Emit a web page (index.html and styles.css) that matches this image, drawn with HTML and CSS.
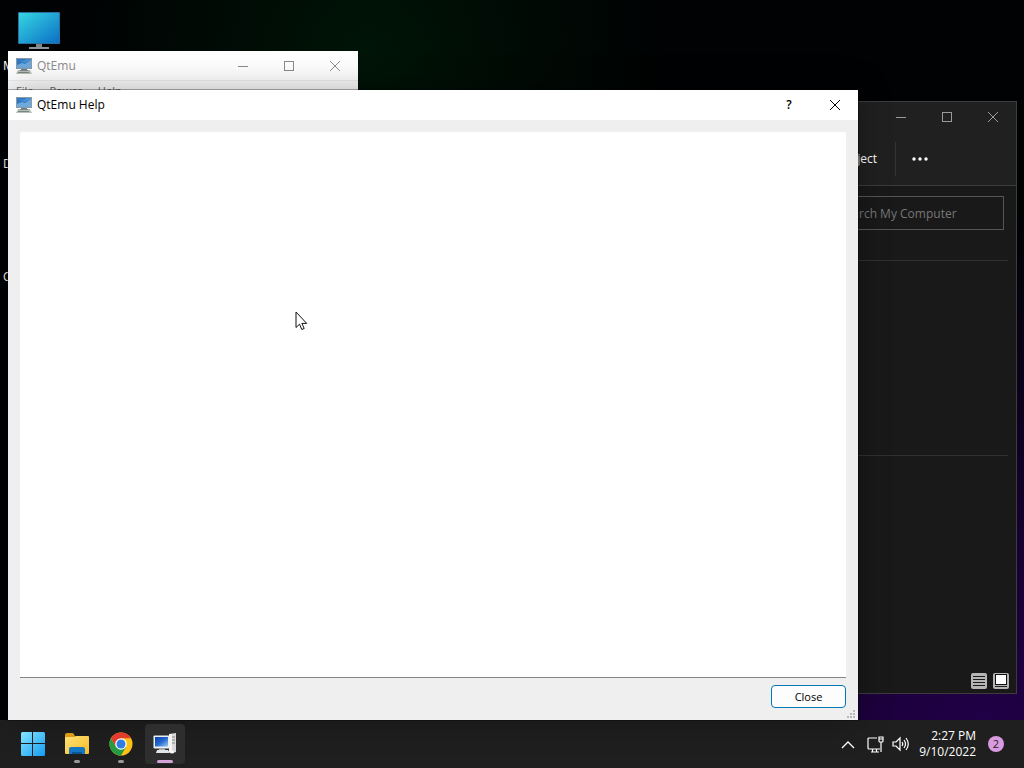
FILE: index.html
```html
<!DOCTYPE html>
<html lang="en">
<head>
    <meta charset="UTF-8">
    <meta name="viewport" content="width=device-width, initial-scale=1.0">
    <title>QtEmu Help</title>
    <link rel="stylesheet" href="styles.css">
</head>
<body>

<!-- Shared icons -->
<svg class="symbols" aria-hidden="true">
    <defs>
        <linearGradient id="screenBlue" x1="0" y1="0" x2="1" y2="1">
            <stop offset="0" stop-color="#35d6e2"/>
            <stop offset="1" stop-color="#0c6fc6"/>
        </linearGradient>
        <linearGradient id="winBlue" x1="0" y1="0" x2="1" y2="1">
            <stop offset="0" stop-color="#86e4ff"/>
            <stop offset="1" stop-color="#149df0"/>
        </linearGradient>
        <linearGradient id="folderYellow" x1="0" y1="0" x2="1" y2="1">
            <stop offset="0" stop-color="#ffe07a"/>
            <stop offset="1" stop-color="#f9bd22"/>
        </linearGradient>
        <linearGradient id="pcBlue" x1="0" y1="0" x2="1" y2="1">
            <stop offset="0" stop-color="#0b3fa8"/>
            <stop offset="0.5" stop-color="#2368cf"/>
            <stop offset="1" stop-color="#9cc8f5"/>
        </linearGradient>
    </defs>
    <symbol id="qtemu" viewBox="0 0 16 16">
        <rect x="0" y="0" width="16" height="11" fill="#8c9aa8"/>
        <rect x="1" y="1" width="14" height="9" fill="#2f78c4"/>
        <path d="M1 7l5-2 3 1 6-4v8H1z" fill="#6ea9dc"/>
        <path d="M1 2l6 1 4-2h4v1L9 5z" fill="#4c8fd2"/>
        <path d="M5 11h6v2H5z" fill="#6b7f8c"/>
        <path d="M2 12h12l2 4H0z" fill="#b9bfb9"/>
        <path d="M2 14.500h11M4 12.500h8" stroke="#78887e" fill="none"/>
    </symbol>
    <symbol id="minimize" viewBox="0 0 12 12"><path d="M1 6.500h10" stroke="currentColor"/></symbol>
    <symbol id="maximize" viewBox="0 0 12 12"><rect x="1.500" y="1.500" width="9" height="9" fill="none" stroke="currentColor"/></symbol>
    <symbol id="cross" viewBox="0 0 12 12"><path d="M1 1l10 10M11 1L1 11" stroke="currentColor" fill="none"/></symbol>
</svg>

<main class="desktop">

    <div class="desktop-icons">
        <div class="shortcut">
            <svg width="44" height="38" viewBox="0 0 44 38">
                <rect x="1" y="0" width="42" height="32" rx="1" fill="#2a6f9e"/>
                <rect x="2" y="1" width="40" height="30" fill="url(#screenBlue)"/>
                <path d="M19 32h6v4h-6z" fill="#7d858b"/>
                <path d="M12 35h20v2H12z" fill="#8d949a"/>
            </svg>
            <span>M</span>
        </div>
        <div class="shortcut"><span>D</span></div>
        <div class="shortcut"><span>C</span></div>
    </div>

    <!-- File explorer -->
    <section class="window explorer">
        <header class="titlebar">
            <div class="controls">
                <button aria-label="Minimize"><svg><use href="#minimize"/></svg></button>
                <button aria-label="Maximize"><svg><use href="#maximize"/></svg></button>
                <button aria-label="Close window"><svg><use href="#cross"/></svg></button>
            </div>
        </header>
        <div class="toolbar">
            <button class="eject">Eject</button>
            <button class="more" aria-label="More">
                <svg width="18" height="4" viewBox="0 0 18 4" fill="#fff"><circle cx="3" cy="2" r="1.700"/><circle cx="9" cy="2" r="1.700"/><circle cx="15" cy="2" r="1.700"/></svg>
            </button>
        </div>
        <div class="search-row">
            <input type="text" class="search" placeholder="Search My Computer" aria-label="Search My Computer">
        </div>
        <div class="group first"></div>
        <div class="group"></div>
        <div class="views">
            <button aria-label="Details">
                <svg width="16" height="16" viewBox="0 0 16 16"><rect width="16" height="16" rx="2" fill="#b5b5b5"/><path d="M2 3.500h12M2 6.500h12M2 9.500h12M2 12.500h12" stroke="#191919"/></svg>
            </button>
            <button aria-label="Large icons">
                <svg width="16" height="16" viewBox="0 0 16 16"><rect width="16" height="16" rx="2" fill="#b5b5b5"/><rect x="2.500" y="1.500" width="11" height="10" fill="#fff" stroke="#111"/><path d="M2 13.500h12" stroke="#222"/></svg>
            </button>
        </div>
    </section>

    <!-- QtEmu main window -->
    <section class="window qtemu">
        <header class="titlebar">
            <svg class="app-icon"><use href="#qtemu"/></svg>
            <h2>QtEmu</h2>
            <div class="controls">
                <button aria-label="Minimize"><svg><use href="#minimize"/></svg></button>
                <button aria-label="Maximize"><svg><use href="#maximize"/></svg></button>
                <button aria-label="Close window"><svg><use href="#cross"/></svg></button>
            </div>
        </header>
        <nav class="menubar">
            <button>File</button>
            <button>Power</button>
            <button>Help</button>
        </nav>
    </section>

    <!-- Help dialog -->
    <section class="window help">
        <header class="titlebar">
            <svg class="app-icon"><use href="#qtemu"/></svg>
            <h1>QtEmu Help</h1>
            <div class="controls">
                <button class="question">?</button>
                <button aria-label="Close window"><svg><use href="#cross"/></svg></button>
            </div>
        </header>
        <div class="help-body">
            <textarea class="help-text" aria-label="Help text" readonly></textarea>
            <div class="actions"><button class="close">Close</button></div>
        </div>
        <svg class="grip" width="9" height="9" viewBox="0 0 9 9" fill="#b8b8b8">
            <path d="M6 0h2v2H6zM3 3h2v2H3zM6 3h2v2H6zM0 6h2v2H0zM3 6h2v2H3zM6 6h2v2H6z"/>
        </svg>
    </section>

    <svg class="cursor" width="13" height="20" viewBox="0 0 13 20">
        <path d="M1 1v15.500l3.500-3.300 2.300 5.300 2.400-1-2.300-5.100h4.800z" fill="#fff" stroke="#111"/>
    </svg>
</main>

<footer class="taskbar">
    <div class="apps">
        <button class="app" aria-label="Start">
            <svg width="24" height="24" viewBox="0 0 24 24" fill="url(#winBlue)"><path d="M1.500 0H11v11H0V1.500Q0 0 1.500 0zM12 0h10.500Q24 0 24 1.500V11H12zM0 12h11v12H1.500Q0 24 0 22.500zM12 12h12v10.500q0 1.500-1.500 1.500H12z"/></svg>
        </button>
        <button class="app running" aria-label="File Explorer">
            <svg width="26" height="24" viewBox="0 0 26 24">
                <path d="M1 3q0-2 2-2h6l2 3v4H1z" fill="#dd9a12"/>
                <path d="M2 5h8l2-1h12q1 0 1 1v16q0 1-1 1H2q-1 0-1-1V6q0-1 1-1z" fill="url(#folderYellow)"/>
                <path d="M5 22v-5q0-2 2-2h12q2 0 2 2v5z" fill="#1377c3"/>
                <path d="M8 22v-2h10v2z" fill="#0a5594"/>
            </svg>
        </button>
        <button class="app running" aria-label="Google Chrome">
            <svg width="24" height="24" viewBox="0 0 24 24">
                <circle cx="12" cy="12" r="11.500" fill="#fbc116"/>
                <path d="M12 12L7 14.900 2.040 6.250A11.500 11.500 0 0 1 21.960 6.250H12z" fill="#e33b2e"/>
                <path d="M12 12L7 14.900 2.040 6.250A11.500 11.500 0 0 0 12 23.500L17 14.900z" fill="#249a41"/>
                <circle cx="12" cy="12" r="5.800" fill="#fff"/>
                <circle cx="12" cy="12" r="4.500" fill="#2f7de1"/>
            </svg>
        </button>
        <button class="app running active" aria-label="QtEmu">
            <svg width="24" height="24" viewBox="0 0 24 24">
                <path d="M16 2l7-1v19l-3 1-4-1z" fill="#d9d9d9"/>
                <path d="M16 2l3 0.500V21l-3-1z" fill="#f5f5f5"/>
                <path d="M19 5h3M19 8h3M19 11h3" stroke="#888"/>
                <rect x="0.500" y="3.500" width="16" height="13" rx="1" fill="#eceff2"/>
                <rect x="2" y="5" width="13" height="9.500" fill="url(#pcBlue)"/>
                <path d="M6 16.500h6v2H6z" fill="#aab2ba"/>
                <path d="M4 18h11l2 3H3z" fill="#e3e6e8"/>
                <ellipse cx="19" cy="20" rx="2" ry="1.500" fill="#fafafa"/>
            </svg>
        </button>
    </div>
    <div class="tray">
        <button aria-label="Show hidden icons"><svg width="14" height="9" viewBox="0 0 14 9" fill="none" stroke="#fff" stroke-width="1.300"><path d="M1 8l6-6 6 6"/></svg></button>
        <button aria-label="Network">
            <svg width="17" height="17" viewBox="0 0 17 17" fill="none" stroke="#fff" stroke-width="1.200"><path d="M10 2H2q-1 0-1 1v9q0 1 1 1h11M5.500 13v3M9.500 13v3M4 16h8M12 1h4v4q0 1-1 1h-2q-1 0-1-1zM14 6v10M12 3h4"/></svg>
        </button>
        <button aria-label="Volume">
            <svg width="17" height="16" viewBox="0 0 17 16" fill="none" stroke="#fff" stroke-width="1.200"><path d="M1 6h3l4-4v12l-4-4H1zM10 6q1.500 2 0 4M12 4q3 4 0 8M14 2q4.500 6 0 12"/></svg>
        </button>
        <button class="clock"><time>2:27 PM</time><time>9/10/2022</time></button>
        <button class="badge" aria-label="2 notifications">2</button>
    </div>
</footer>

</body>
</html>
```
FILE: styles.css
```css
* {
    box-sizing: border-box;
}

body {
    margin: 0;
    height: 100vh;
    display: flex;
    flex-direction: column;
    overflow: hidden;
    font-family: "Open Sans", "Noto Sans", sans-serif;
    font-size: 12px;
    line-height: 16px;
    background-color: #000;
}

button {
    padding: 0;
    border: none;
    background: none;
    color: inherit;
    font: inherit;
}

svg {
    display: block;
}

h1, h2 {
    margin: 0;
    font-size: 12px;
    font-weight: normal;
}

.symbols {
    position: absolute;
    width: 0;
    height: 0;
}

/* Desktop */
.desktop {
    position: relative;
    flex: 1;
    background:
        radial-gradient(ellipse at 96% 100%, #200046 0, #1a0038 12%, transparent 50%),
        radial-gradient(ellipse at 36% 8%, #001407 0, transparent 32%),
        #000203;
}

.desktop-icons {
    display: flex;
    flex-direction: column;
    width: 80px;
    padding: 12px 3px;
    color: #fff;
}

.shortcut {
    display: flex;
    flex-direction: column;
    justify-content: flex-end;
    height: 113px;
}

.shortcut:first-child {
    height: 62px;
    justify-content: space-between;
    margin-bottom: -15px;
}

.shortcut svg {
    margin-left: 14px;
}

/* Windows */
.window {
    position: absolute;
    display: flex;
    flex-direction: column;
}

.titlebar {
    display: flex;
    align-items: center;
    flex: none;
    height: 29px;
    padding-left: 8px;
}

.app-icon {
    width: 16px;
    height: 16px;
    margin-right: 5px;
}

.controls {
    display: flex;
    margin-left: auto;
}

.controls button {
    display: flex;
    align-items: center;
    justify-content: center;
    width: 46px;
    height: 28px;
}

.controls svg {
    width: 12px;
    height: 12px;
}

.qtemu {
    top: 51px;
    left: 8px;
    width: 350px;
    height: 39px;
    overflow: hidden;
    background-color: #fff;
    color: #8c8c8c;
}

.menubar {
    display: flex;
    gap: 16px;
    padding: 2px 8px;
    border-top: 1px solid #eee;
    background-color: #fbfbfb;
    color: #666;
    font-size: 11px;
}

.help {
    top: 90px;
    right: 166px;
    bottom: 0;
    left: 8px;
    background-color: #efefef;
    color: #000;
    box-shadow: 0 0 0 1px rgba(0, 0, 0, 0.3), 0 0 32px rgba(0, 0, 0, 0.3);
}

.help .titlebar {
    height: 30px;
    background-color: #fff;
}

.question {
    font-weight: 600;
}

.help-body {
    flex: 1;
    display: flex;
    flex-direction: column;
    gap: 7px;
    padding: 12px;
}

.help-text {
    flex: 1;
    display: block;
    width: 100%;
    border: none;
    border-bottom: 1px solid #858585;
    border-radius: 2px 2px 0 0;
    outline: none;
    resize: none;
    background-color: #fff;
}

.actions {
    display: flex;
    justify-content: flex-end;
}

.close {
    width: 75px;
    height: 23px;
    border: 1px solid #0078b4;
    border-radius: 4px;
    background-color: #fdfdfd;
    font-size: 11px;
}

.grip {
    position: absolute;
    right: 2px;
    bottom: 1px;
}

.cursor {
    position: absolute;
    top: 311px;
    left: 295px;
}

/* Explorer */
.explorer {
    top: 101px;
    right: 7px;
    bottom: 26px;
    left: 400px;
    border: 1px solid #3c3c3c;
    background-color: #191919;
    color: #fff;
}

.explorer .titlebar {
    background-color: #202020;
    color: #999;
}

.toolbar {
    display: flex;
    align-items: center;
    justify-content: flex-end;
    height: 55px;
    padding: 2px 87px 0 0;
    border-bottom: 1px solid #3c3c3c;
    background-color: #202020;
}

.eject {
    height: 34px;
    padding-right: 18px;
    border-right: 1px solid #333;
}

.more {
    padding-left: 15px;
}

.search-row {
    display: flex;
    justify-content: flex-end;
    padding: 10px 12px 30px;
}

.search {
    width: 176px;
    height: 34px;
    padding: 0 10px;
    border: 1px solid #555;
    background-color: #191919;
    font: inherit;
    color: #fff;
}

.search::placeholder {
    color: #777;
}

.group {
    margin-right: 8px;
    border-top: 1px solid #303030;
}

.first {
    height: 195px;
}

.views {
    display: flex;
    gap: 6px;
    justify-content: flex-end;
    margin-top: auto;
    padding: 0 7px 4px;
}

/* Taskbar */
.taskbar {
    display: flex;
    justify-content: space-between;
    height: 48px;
    padding: 0 12px 0 13px;
    background-color: #1f1f1f;
    color: #fff;
}

.apps, .tray {
    display: flex;
    align-items: center;
}

.apps {
    gap: 4px;
}

.app {
    position: relative;
    display: flex;
    align-items: center;
    justify-content: center;
    width: 40px;
    height: 40px;
    border-radius: 4px;
}

.running::after {
    content: "";
    position: absolute;
    bottom: 1px;
    width: 6px;
    height: 3px;
    border-radius: 2px;
    background-color: #999;
}

.active {
    background-color: #2e2e2e;
}

.active::after {
    width: 16px;
    background-color: #d5a3d9;
}

.tray {
    gap: 8px;
    padding-right: 8px;
}

.tray button:first-child {
    margin-right: 4px;
}

.clock {
    display: flex;
    flex-direction: column;
    align-items: flex-end;
    margin: 0 4px 0 2px;
}

.badge {
    width: 16px;
    height: 16px;
    border-radius: 8px;
    background-color: #d99ae0;
    color: #222;
    font-size: 11px;
}
```
